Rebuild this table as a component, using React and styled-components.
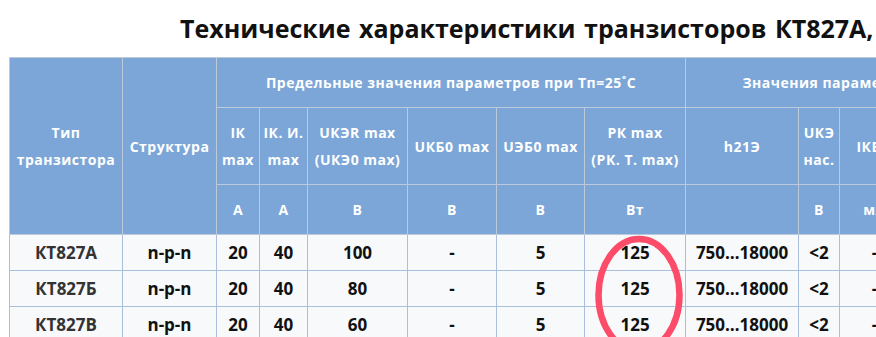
import React from 'react';
import styled, { createGlobalStyle } from 'styled-components';

const GlobalStyle = createGlobalStyle`
  html, body {
    margin: 0;
    padding: 0;
    background: #ffffff;
    overflow: hidden;
  }
  body {
    font-family: 'Open Sans', 'Noto Sans', sans-serif;
  }
`;

const columns = [113, 94, 43, 48, 100, 89, 88, 101, 113, 41, 70, 80, 80];

const rows = [
  ['КТ827А', 'n-p-n', '20', '40', '100', '-', '5', '125', '750…18000', '<2', '-', '4', '1'],
  ['КТ827Б', 'n-p-n', '20', '40', '80', '-', '5', '125', '750…18000', '<2', '-', '4', '1'],
  ['КТ827В', 'n-p-n', '20', '40', '60', '-', '5', '125', '750…18000', '<2', '-', '4', '1'],
];

export default function App() {
  return (
    <Page>
      <GlobalStyle />
      <Title>Технические характеристики транзисторов КТ827А, КТ827Б, КТ827В</Title>
      <TableWrap>
        <Table>
          <colgroup>
            {columns.map((w, i) => (
              <col key={i} style={{ width: w }} />
            ))}
          </colgroup>
          <thead>
            <tr>
              <Th rowSpan={3}>
                Тип
                <br />
                транзистора
              </Th>
              <Th rowSpan={3}>Структура</Th>
              <Th colSpan={6}>Предельные значения параметров при Тп=25˚С</Th>
              <Th colSpan={5}>Значения параметров при Тп=25˚С</Th>
            </tr>
            <tr>
              <Th>
                IК
                <br />
                max
              </Th>
              <Th>
                IК. И.
                <br />
                max
              </Th>
              <Th>
                UКЭR max
                <br />
                (UКЭ0 max)
              </Th>
              <Th>UКБ0 max</Th>
              <Th>UЭБ0 max</Th>
              <Th>
                PК max
                <br />
                (PК. Т. max)
              </Th>
              <Th>h21Э</Th>
              <Th>
                UКЭ
                <br />
                нас.
              </Th>
              <Th>IКБО</Th>
              <Th>fгр.</Th>
              <Th>КШ</Th>
            </tr>
            <tr>
              <Th>А</Th>
              <Th>А</Th>
              <Th>В</Th>
              <Th>В</Th>
              <Th>В</Th>
              <Th>Вт</Th>
              <Th></Th>
              <Th>В</Th>
              <Th>мА</Th>
              <Th>МГц</Th>
              <Th>дБ</Th>
            </tr>
          </thead>
          <tbody>
            {rows.map((r, i) => (
              <tr key={i}>
                {r.map((c, j) => (
                  <Td key={j} $first={j === 0}>
                    {c}
                  </Td>
                ))}
              </tr>
            ))}
          </tbody>
        </Table>
        <Mark viewBox="0 0 100 130">
          <ellipse cx="50" cy="63" rx="40.5" ry="56" fill="none" stroke="#fd4c69" strokeWidth="6.5" />
        </Mark>
      </TableWrap>
    </Page>
  );
}

const Page = styled.div`
  width: 876px;
  height: 337px;
  overflow: hidden;
  position: relative;
`;

const Title = styled.h1`
  margin: 12px 0 0 180px;
  height: 45px;
  font-size: 25px;
  line-height: 32px;
  font-weight: 700;
  word-spacing: 2px;
  color: #111111;
  white-space: nowrap;
`;

const TableWrap = styled.div`
  position: relative;
  margin-left: 9px;
  width: 1200px;
`;

const Table = styled.table`
  border-collapse: collapse;
  table-layout: fixed;
  width: 980px;
`;

const Th = styled.th`
  background: #7ba6d7;
  color: #ffffff;
  font-size: 14px;
  font-weight: 700;
  letter-spacing: 0.5px;
  line-height: 27px;
  padding: 11px 0;
  border: 1px solid #bccadb;
  text-align: center;
  vertical-align: middle;
  white-space: nowrap;
`;

const Td = styled.td`
  background: #f8f9fb;
  color: ${p => (p.$first ? '#333333' : '#111111')};
  font-size: 17px;
  font-weight: 700;
  height: 35px;
  padding: 0 2px;
  border: 1px solid #a9bfdc;
  text-align: center;
  vertical-align: middle;
  white-space: nowrap;
`;

const Mark = styled.svg`
  position: absolute;
  left: 580px;
  top: 175px;
  width: 100px;
  height: 130px;
  overflow: visible;
`;
